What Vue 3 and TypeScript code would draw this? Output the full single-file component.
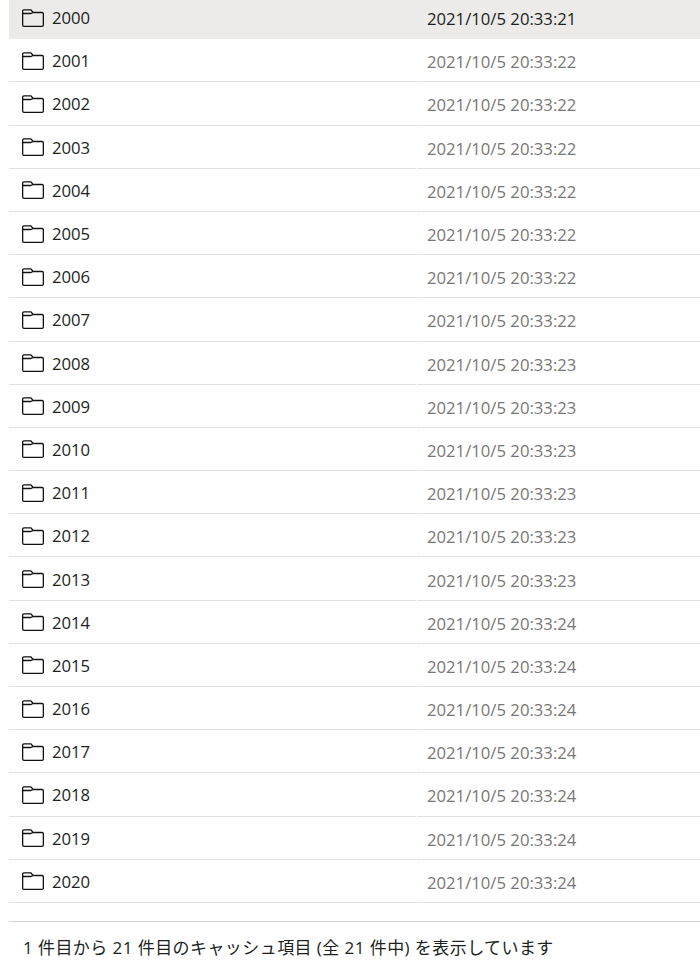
<script setup lang="ts">
interface Row {
  name: string
  date: string
}

const seconds = [21, 22, 22, 22, 22, 22, 22, 22, 23, 23, 23, 23, 23, 23, 24, 24, 24, 24, 24, 24, 24]
const rows: Row[] = seconds.map((s, i) => ({
  name: String(2000 + i),
  date: `2021/10/5 20:33:${s}`,
}))
</script>

<template>
  <div class="page">
    <div class="list">
      <div v-for="(row, i) in rows" :key="row.name" class="row" :class="{ selected: i === 0 }">
        <div class="cell name">
          <svg class="folder" width="22" height="18" viewBox="0 0 22 18" fill="none" stroke="currentColor" stroke-width="1.3">
            <path d="M.65 16V2.2c0-.8.5-1.3 1.3-1.3h7l2.2 2.6h8.9c.8 0 1.3.5 1.3 1.3v11.2c0 .8-.5 1.3-1.3 1.3H2c-.8 0-1.35-.5-1.35-1.3Z" />
            <path d="M.65 4.5h8l2.3-1" />
          </svg>
          <span>{{ row.name }}</span>
        </div>
        <div class="cell date">{{ row.date }}</div>
      </div>
    </div>
    <div class="footer">1 件目から 21 件目のキャッシュ項目 (全 21 件中) を表示しています</div>
  </div>
</template>

<style>
html, body { background: #fff; }
</style>

<style scoped>
.page {
  width: 700px;
  height: 974px;
  overflow: hidden;
  background: #fff;
  font-family: "Open Sans", "Noto Sans CJK JP", sans-serif;
  font-size: 16.7px;
  color: #201f1e;
}
.list {
  margin: -4px 0 0 9px;
}
.row {
  display: grid;
  grid-template-columns: 407px 1fr;
  column-gap: 1px;
  height: 43.2px;
}
.cell {
  display: flex;
  align-items: center;
  border-bottom: 1px solid #dfe1e6;
  padding-top: 1px;
}
.name {
  gap: 8px;
  padding-left: 13px;
}
.folder {
  flex: none;
  color: #111;
}
.date {
  padding-left: 10px;
  padding-top: 3px;
  color: #797775;
}
.selected {
  column-gap: 0;
  grid-template-columns: 408px 1fr;
}
.selected .cell {
  background: #edebe9;
  border-bottom: 0;
  padding-bottom: 1px;
}
.selected .date {
  color: #201f1e;
}
.footer {
  margin: 18px 0 0 9px;
  border-top: 1px solid #d6d4da;
  padding: 14px 0 0 14px;
  line-height: 24px;
  font-size: 17px;
  letter-spacing: 0.43px;
}
</style>
